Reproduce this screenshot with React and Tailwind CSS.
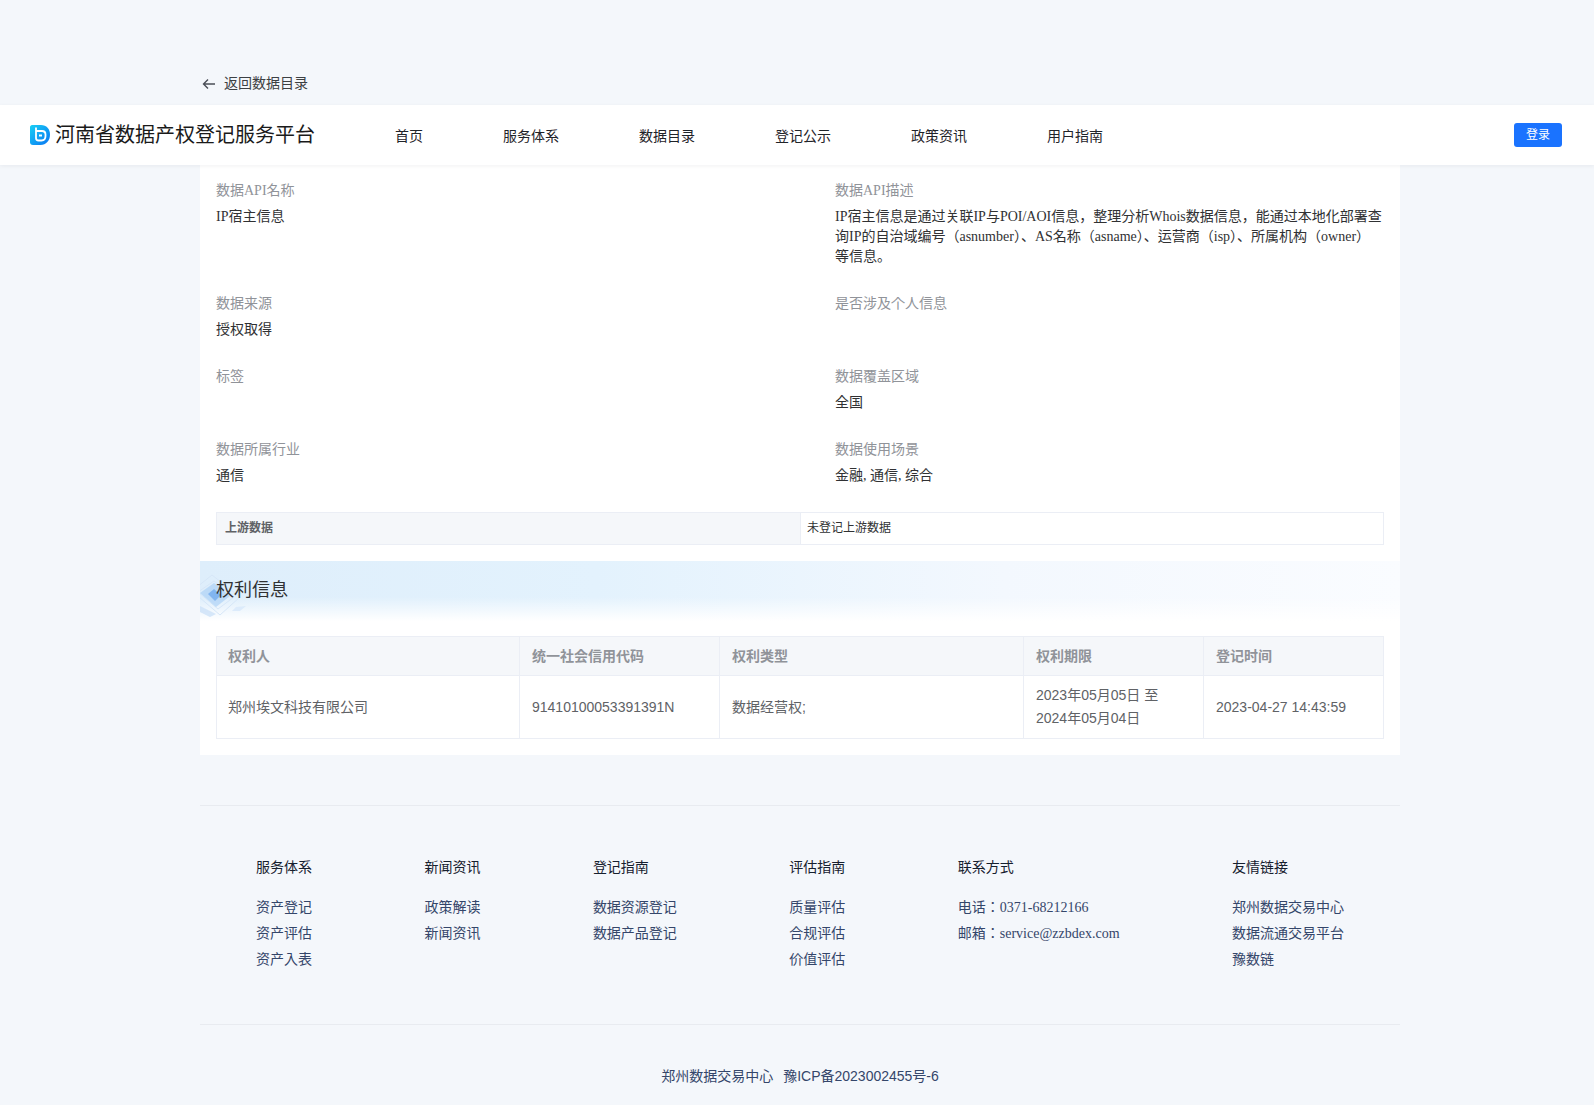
const nav = ["首页", "服务体系", "数据目录", "登记公示", "政策资讯", "用户指南"];

const footerCols = [
  { title: "服务体系", items: ["资产登记", "资产评估", "资产入表"] },
  { title: "新闻资讯", items: ["政策解读", "新闻资讯"] },
  { title: "登记指南", items: ["数据资源登记", "数据产品登记"] },
  { title: "评估指南", items: ["质量评估", "合规评估", "价值评估"] },
  { title: "联系方式", items: ["电话：0371-68212166", "邮箱：service@zzbdex.com"] },
  { title: "友情链接", items: ["郑州数据交易中心", "数据流通交易平台", "豫数链"] },
];

const SERIF = "font-['Liberation_Serif','Noto_Sans_CJK_JP',serif]";

function Logo() {
  return (
    <svg width="20" height="20" viewBox="0 0 20 20" className="shrink-0">
      <defs>
        <linearGradient id="lg" x1="0" y1="0" x2="1" y2="1">
          <stop offset="0" stopColor="#18d0f5" />
          <stop offset="1" stopColor="#0a74f2" />
        </linearGradient>
      </defs>
      <path d="M2 0H11C16.5 0 20 4 20 9.5C20 15.5 16 20 10.5 20H3C1 20 0 19 0 17V2C0 1 1 0 2 0Z" fill="url(#lg)" />
      <path d="M6 2.5V13C6 14.5 7 15.5 8.5 15.5H11.5C14 15.5 15.5 13.5 15.5 11V9.5C15.5 7.5 14 6 12 6H6" fill="none" stroke="#fff" strokeWidth="1.8" />
      <path d="M9 9.5H12V11.5H9Z" fill="#fff" />
    </svg>
  );
}

function BackArrow() {
  return (
    <svg width="14" height="12" viewBox="0 0 14 12" className="ml-[2px] mr-[8px] shrink-0" fill="none" stroke="#4a4f57" strokeWidth="1.4">
      <path d="M13 6H1.5M6 1.5L1.5 6L6 10.5" />
    </svg>
  );
}

function Field({ label, children }) {
  return (
    <div className="w-[619px] shrink-0">
      <div className="text-sm leading-5 text-[#909399]">{label}</div>
      <div className="mt-[6px] min-h-5 text-sm leading-5 text-[#303133]">{children}</div>
    </div>
  );
}

function BannerArt() {
  return (
    <svg width="60" height="60" viewBox="0 0 60 60" className="absolute left-0 top-0 blur-[0.6px]">
      <g fill="none" stroke="#d6e6f7" strokeWidth="1">
        <path d="M-8 30L12 14L40 36L20 54Z" />
        <path d="M-2 31L14 20L34 36L18 48Z" />
      </g>
      <path d="M0 32L14 22L30 35L16 46Z" fill="#a5cdf5" opacity="0.6" />
      <path d="M8 33L14 28L21 34L15 40Z" fill="#6aa6ec" opacity="0.7" />
      <path d="M0 45L16 53L10 56L0 51Z" fill="#cfe3f8" opacity="0.85" />
      <path d="M36 46L46 45L40 50L32 50Z" fill="#d8e9fa" opacity="0.85" />
    </svg>
  );
}

export default function App() {
  return (
    <div className={`min-h-[1105px] bg-[#f4f7fb] ${SERIF}`}>
      <div className="ml-[200px] h-[105px] w-[1200px] pt-[72px]">
        <div className="flex h-6 items-center text-sm text-[#3c4043]">
          <BackArrow />
          返回数据目录
        </div>
      </div>

      <header className="relative z-10 flex h-[60px] items-center bg-white px-[30px] shadow-[0_1px_4px_rgba(0,21,41,0.06)]">
        <Logo />
        <div className="ml-[5px] text-xl text-[#1a1a1a]">河南省数据产权登记服务平台</div>
        <nav className="ml-20 flex translate-y-[2px] gap-20 text-sm text-[#1f2329]">
          {nav.map((n) => (
            <span key={n}>{n}</span>
          ))}
        </nav>
        <button className="ml-auto mr-[2px] h-6 w-12 rounded-[3px] bg-[#1a73ff] text-xs text-white">登录</button>
      </header>

      <main className="ml-[200px] w-[1200px] bg-white pb-4 pt-4">
        <div className="px-4">
          <div className="flex">
            <Field label="数据API名称">IP宿主信息</Field>
            <Field label="数据API描述">
              <div className="w-[548px] text-[#303133]">
                IP宿主信息是通过关联IP与POI/AOI信息，整理分析Whois数据信息，能通过本地化部署查询IP的自治域编号（asnumber）、AS名称（asname）、运营商（isp）、所属机构（owner）等信息。
              </div>
            </Field>
          </div>
          <div className="mt-[27px] flex">
            <Field label="数据来源">授权取得</Field>
            <Field label="是否涉及个人信息" />
          </div>
          <div className="mt-[27px] flex">
            <Field label="标签" />
            <Field label="数据覆盖区域">全国</Field>
          </div>
          <div className="mt-[27px] flex">
            <Field label="数据所属行业">通信</Field>
            <Field label="数据使用场景">金融, 通信, 综合</Field>
          </div>
        </div>

        <div className="mx-4 mt-[26px] flex h-[33px] border border-[#ebeef5] text-xs leading-[31px]">
          <div className="w-[583px] bg-[#f5f7fa] pl-2 font-bold text-[#606266]">上游数据</div>
          <div className="flex-1 border-l border-[#ebeef5] pl-[6px] text-[#303133]">未登记上游数据</div>
        </div>

        <div className="relative mt-4 h-[60px] overflow-hidden bg-[linear-gradient(to_bottom,#ffffff00_60%,#ffffff_100%),linear-gradient(to_right,#deeefb,#e3f2fd_33%,#f3f8fe_67%,#fafcff)] pl-4 text-lg leading-[58px] text-[#303133]">
          <BannerArt />
          <span className="relative">权利信息</span>
        </div>

        <table className="ml-4 mt-[15px] w-[1167px] table-fixed border-collapse font-['Liberation_Sans','Noto_Sans_CJK_JP',sans-serif] text-sm leading-[23px]">
          <colgroup>
            <col className="w-[303px]" />
            <col className="w-[200px]" />
            <col className="w-[304px]" />
            <col className="w-[180px]" />
            <col className="w-[180px]" />
          </colgroup>
          <thead>
            <tr className="h-[39px] bg-[#f5f7fa] text-left text-[#909399]">
              {["权利人", "统一社会信用代码", "权利类型", "权利期限", "登记时间"].map((h, i) => (
                <th key={h} className={`border border-[#ebeef5] pr-3 font-bold ${i === 0 ? "pl-[11px]" : "pl-3"}`}>{h}</th>
              ))}
            </tr>
          </thead>
          <tbody>
            <tr className="text-[#606266]">
              <td className="border border-[#ebeef5] py-2 pl-[11px] pr-3">郑州埃文科技有限公司</td>
              <td className="border border-[#ebeef5] px-3 py-2">91410100053391391N</td>
              <td className="border border-[#ebeef5] px-3 py-2">数据经营权;</td>
              <td className="border border-[#ebeef5] px-3 py-2">2023年05月05日 至 2024年05月04日</td>
              <td className="border border-[#ebeef5] px-3 py-2">2023-04-27 14:43:59</td>
            </tr>
          </tbody>
        </table>
      </main>

      <footer className="ml-[200px] mt-[50px] w-[1200px]">
        <div className="flex justify-between border-y border-[#e8ebf0] px-14 pb-[52px] pt-[50px] text-sm">
          {footerCols.map((c) => (
            <div key={c.title}>
              <div className="leading-6 text-[#16202e]">{c.title}</div>
              <div className="mt-4 flex flex-col gap-[2px] text-[#34466a]">
                {c.items.map((i) => (
                  <div key={i} className="leading-6">{i}</div>
                ))}
              </div>
            </div>
          ))}
        </div>
        <div className="pt-[39px] text-center font-['Liberation_Sans','Noto_Sans_CJK_JP',sans-serif] text-sm leading-6 text-[#34466a]">
          郑州数据交易中心<span className="ml-[10px]">豫ICP备2023002455号-6</span>
        </div>
      </footer>
    </div>
  );
}
